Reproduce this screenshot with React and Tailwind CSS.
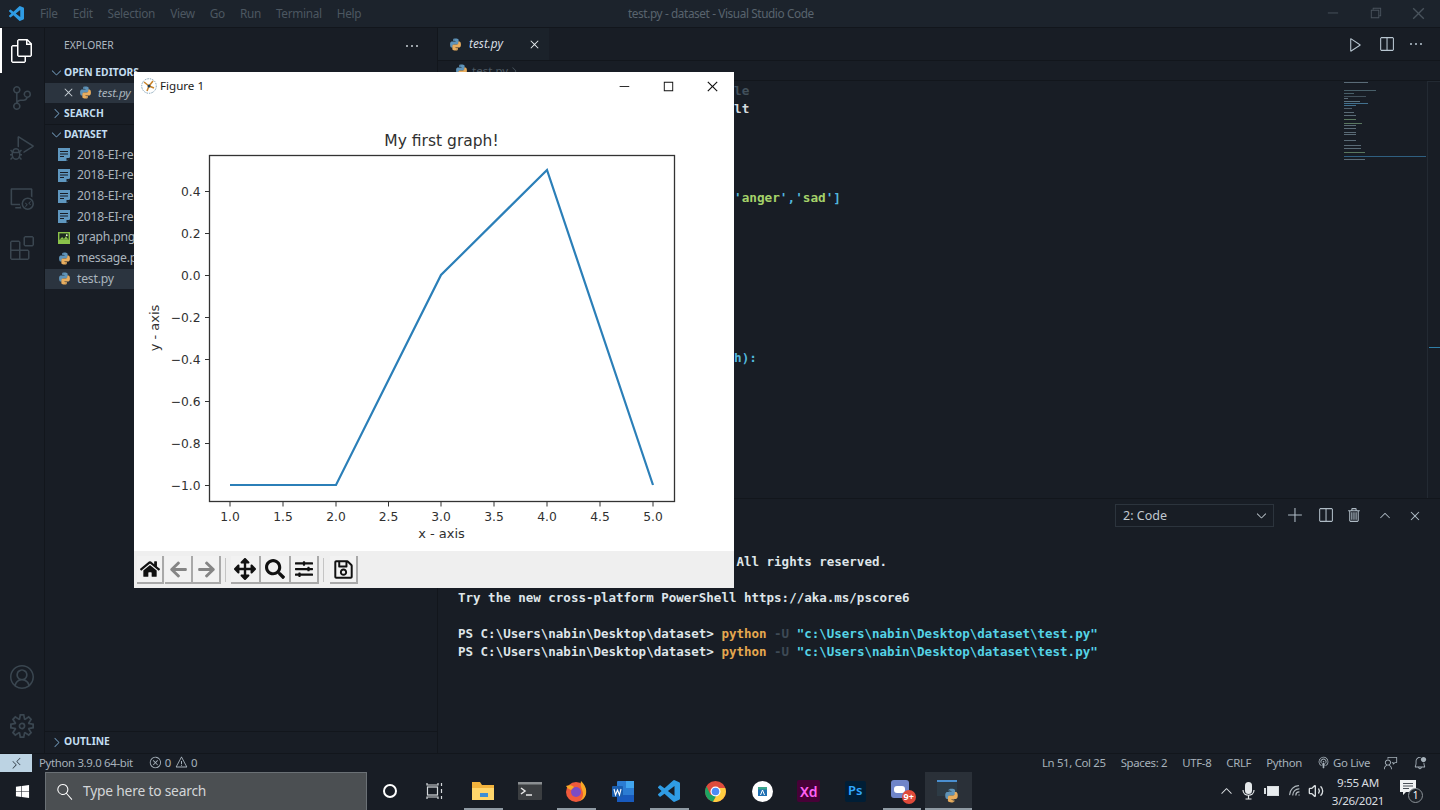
import React from "react";
import {
  VscFiles, VscSourceControl, VscDebugAlt, VscRemoteExplorer, VscExtensions, VscAccount, VscSettingsGear,
  VscEllipsis, VscChevronRight, VscChevronDown, VscChevronUp, VscClose, VscAdd, VscTrash, VscSplitHorizontal,
  VscPlay, VscError, VscWarning, VscRemote, VscFeedback, VscBellDot, VscBroadcast, VscChromeMinimize,
  VscChromeRestore, VscChromeClose, VscChromeMaximize, VscSearch,
} from "react-icons/vsc";
import { FaHome, FaArrowLeft, FaArrowRight, FaArrowsAlt, FaSearch, FaSlidersH, FaRegSave, FaWindows } from "react-icons/fa";
import { Wifi, Volume2 } from "lucide-react";

const Py = ({ size = 14, className = "" }) => (
  <svg width={size} height={size} viewBox="0 0 24 24" className={className}>
    <path fill="#5f93b8" d="M11.9 1C7.2 1 7.5 3 7.5 3v2.6h4.6v.8H5.4S2 6 2 11.900s3 5.700 3 5.700h1.900v-2.700s-.1-3 3-3h5c0 0 2.900 0 2.900-2.800V3.900S18.200 1 11.900 1zM9.200 2.700a.9.900 0 110 1.800.9.900 0 010-1.800z" />
    <path fill="#e8ad5e" d="M12.100 23c4.700 0 4.400-2 4.400-2v-2.600h-4.600v-.8h6.700s3.400.4 3.400-5.500-3-5.700-3-5.700h-1.900v2.700s.1 3-3 3h-5s-2.900 0-2.900 2.800v5.200S5.800 23 12.100 23zm2.700-1.700a.9.900 0 110-1.800.9.900 0 010 1.800z" />
  </svg>
);

const DocIcon = () => (
  <svg width="12" height="13" viewBox="0 0 12 13">
    <path fill="#5f97bf" d="M0 0h12v9l-3 4H0z" />
    <path fill="#181d25" d="M2 3h8v1H2zM2 5.500h8v1H2zM2 8h4v1H2z" />
    <path fill="#181d25" d="M8.500 13v-3H12z" />
  </svg>
);

const ImgIcon = () => (
  <svg width="12" height="12" viewBox="0 0 13 13">
    <rect width="13" height="13" fill="#8bc34a" />
    <rect x="1.500" y="1.500" width="10" height="7" fill="#1d2a20" />
    <path fill="#8bc34a" d="M1.500 8.500l3-3 2 2 2-3 3 4z" />
    <circle cx="9.500" cy="3.500" r="1" fill="#e9f5d8" />
  </svg>
);

const Row = ({ icon, label, active }) => (
  <div className={`flex h-[20.67px] items-center pl-[13px] text-[12.200px] tracking-[-0.2px] text-[#aab4bd] ${active ? "bg-[#2b343f]" : ""}`}>
    <span className="flex w-[19px] items-center">{icon}</span>
    <span className="whitespace-nowrap">{label}</span>
  </div>
);

const Header = ({ open, label, border, tight }) => (
  <div className={`flex h-[20.67px] items-center text-[10.300px] font-bold text-[#c3ddf0] ${tight ? "pb-px" : ""} ${border ? "border-t border-[#12161c]" : ""}`}>
    <span className="flex w-[19px] items-center pl-[4px] text-[#6d93b3]">{open ? <VscChevronDown size={15} /> : <VscChevronRight size={15} />}</span>
    <span className="whitespace-nowrap">{label}</span>
  </div>
);

const ToolBtn = ({ w, children, className = "" }) => (
  <div className={`flex h-[28px] items-center justify-center border-r-2 border-b-2 border-[#a9a9a9] bg-[#f2f2f2] ${w} ${className}`}>{children}</div>
);

const Slot = ({ children, run, active }) => (
  <div className={`relative flex h-full w-[46.5px] items-center justify-center ${active ? "bg-[#2a3038]" : ""}`}>
    {children}
    {run ? <div className={`absolute bottom-0 h-[2px] bg-[#8f9aa3] ${active ? "inset-x-0" : "inset-x-[4px]"}`} /> : null}
  </div>
);

const VSLogo = ({ size = 20 }) => (
  <svg width={size} height={size} viewBox="0 0 24 24">
    <path fill="#2f9ce4" d="M23.150 2.587L18.210.21a1.494 1.494 0 0 0-1.705.29l-9.460 8.630-4.120-3.128a.999.999 0 0 0-1.276.057L.327 7.261A1 1 0 0 0 .326 8.740L3.899 12 .326 15.260a1 1 0 0 0 .001 1.479L1.650 17.940a.999.999 0 0 0 1.276.057l4.120-3.128 9.460 8.630a1.492 1.492 0 0 0 1.704.29l4.942-2.377A1.500 1.500 0 0 0 24 20.060V3.939a1.500 1.500 0 0 0-.85-1.352zm-5.146 14.861L10.826 12l7.178-5.448v10.896z" />
  </svg>
);

const ytick = [["0.4", 191.5], ["0.2", 233.5], ["0.0", 275.5], ["−0.2", 317.5], ["−0.4", 359.5], ["−0.6", 401.5], ["−0.8", 443.5], ["−1.0", 485.5]];
const xtick = [["1.0", 230], ["1.5", 283], ["2.0", 336], ["2.5", 388.5], ["3.0", 441], ["3.5", 494], ["4.0", 547], ["4.5", 600], ["5.0", 653]];

const Chart = () => (
  <svg width="600" height="451" viewBox="134 100 600 451" className="block" fontFamily="'DejaVu Sans', sans-serif" fill="#303030">
    <text x="441.500" y="146" fontSize="15.500" textAnchor="middle">My first graph!</text>
    <rect x="209.500" y="155.500" width="465" height="346" fill="none" stroke="#333" strokeWidth="1.300" />
    {ytick.map(([t, y]) => (
      <g key={t}>
        <path d={`M205 ${y}h4.500`} stroke="#333" />
        <text x="200.500" y={y + 4.500} fontSize="12.300" textAnchor="end">{t}</text>
      </g>
    ))}
    {xtick.map(([t, x]) => (
      <g key={t}>
        <path d={`M${x} 502v4.500`} stroke="#333" />
        <text x={x} y="521" fontSize="12.300" textAnchor="middle">{t}</text>
      </g>
    ))}
    <text x="441.500" y="538" fontSize="13" textAnchor="middle">x - axis</text>
    <text x="0" y="0" fontSize="13" textAnchor="middle" transform="translate(159 328) rotate(-90)">y - axis</text>
    <polyline points="230,485 336,485 441,275 547,170 653,485" fill="none" stroke="#2b7fb8" strokeWidth="2.200" />
  </svg>
);

const Minimap = () => {
  const lines = [
    [83, 24, "#6b7f8c"], [91, 32, "#55707a"], [94, 10, "#55707a"], [97, 22, "#4d5f6a"], [99, 4, "#6b7f8c"], [102, 16, "#6b8a99"],
    [104, 24, "#4e87aa"], [106, 12, "#4e87aa"], [109, 8, "#5b6f7c"], [113, 10, "#6b7f8c"], [116, 12, "#6b7f8c"], [120, 12, "#6b8f6f"],
    [124, 18, "#6b8f6f"], [126, 12, "#6b7f8c"], [129, 12, "#6b7f8c"], [133, 12, "#6b7f8c"], [135, 12, "#6b7f8c"], [141, 12, "#6b7f8c"],
    [146, 17, "#6b7f8c"], [149, 17, "#6b7f8c"], [153, 21, "#6b8f6f"], [160, 21, "#6b7f8c"],
  ];
  return (
    <svg width="95" height="82" viewBox="1345 82 95 82" className="absolute left-[906px] top-0">
      {lines.map(([y, w, c]) => <rect key={y} x="1345" y={y} width={w} height="1" fill={c} opacity="0.8" />)}
      <rect x="1345" y="157" width="82" height="1" fill="#2f5f80" />
    </svg>
  );
};

export default function App() {
  return (
    <div className="relative flex h-[810px] w-[1440px] flex-col overflow-hidden bg-[#181d25] font-['Noto_Sans',sans-serif] text-[#b8c2cb]">
      {/* title bar */}
      <div className="relative flex h-[28px] shrink-0 items-center border-b border-[#12161c] bg-[#1c232c] text-[11.800px] tracking-[-0.3px] text-[#4c5761]">
        <div className="flex w-[40px] justify-center pr-[7px]"><VSLogo size={15} /></div>
        <div className="flex gap-[15px]">
          <span>File</span><span>Edit</span><span>Selection</span><span>View</span><span>Go</span><span>Run</span><span>Terminal</span><span>Help</span>
        </div>
        <span className="absolute left-[628px] top-[5px] whitespace-nowrap tracking-[-0.4px] text-[#59646e]">test.py - dataset - Visual Studio Code</span>
        <div className="ml-auto flex text-[#49535c]">
          <span className="flex w-[44px] justify-center"><VscChromeMinimize size={15} /></span>
          <span className="flex w-[42px] justify-center"><VscChromeRestore size={15} /></span>
          <span className="flex w-[44px] justify-center"><VscChromeClose size={17} /></span>
        </div>
      </div>

      {/* body */}
      <div className="flex min-h-0 flex-1">
        {/* activity bar */}
        <div className="relative flex w-[45px] shrink-0 flex-col items-center border-r border-[#12161c] bg-[#181d25] text-[#3a4650]">
          <div className="absolute left-0 top-0 h-[45px] w-[2px] bg-white" />
          <div className="flex h-[45px] items-center text-white"><VscFiles size={24} /></div>
          <div className="flex h-[50px] items-center"><VscSourceControl size={24} /></div>
          <div className="flex h-[50px] items-center"><VscDebugAlt size={24} /></div>
          <div className="flex h-[50px] items-center"><VscRemoteExplorer size={24} /></div>
          <div className="flex h-[50px] items-center"><VscExtensions size={24} /></div>
          <div className="mt-auto flex h-[50px] items-center pb-[4px]"><VscAccount size={24} /></div>
          <div className="flex h-[49px] items-center pb-[6px]"><VscSettingsGear size={24} /></div>
        </div>

        {/* sidebar */}
        <div className="flex w-[393px] shrink-0 flex-col border-r border-[#12161c] bg-[#181d25]">
          <div className="flex h-[34px] shrink-0 items-center pl-[19px] pr-[17px] pt-[2px] text-[10.300px] text-[#aeb8c1]">
            <span>EXPLORER</span>
            <VscEllipsis size={16} className="ml-auto text-[#c8d0d6]" />
          </div>
          <Header open label="OPEN EDITORS" />
          <div className="flex h-[20.67px] items-center bg-[#2b343f] pl-[16px] text-[11.600px] italic tracking-[-0.1px] text-[#aab4bd]">
            <VscClose size={15} className="mr-[3px] text-[#c8d0d6]" />
            <Py size={13} className="mr-[6px]" />
            <span>test.py</span>
          </div>
          <Header label="SEARCH" />
          <Header open label="DATASET" border tight />
          <Row icon={<DocIcon />} label="2018-EI-re" />
          <Row icon={<DocIcon />} label="2018-EI-re" />
          <Row icon={<DocIcon />} label="2018-EI-re" />
          <Row icon={<DocIcon />} label="2018-EI-re" />
          <Row icon={<ImgIcon />} label="graph.png" />
          <Row icon={<Py size={13} />} label="message.py" />
          <Row icon={<Py size={13} />} label="test.py" active />
          <div className="mt-auto border-t border-[#12161c]">
            <Header label="OUTLINE" tight />
          </div>
        </div>

        {/* editor column */}
        <div className="flex min-w-0 flex-1 flex-col">
          <div className="flex h-[33px] shrink-0 items-stretch border-b border-[#12161c]">
            <div className="flex w-[111px] items-center bg-[#1b222a] pl-[11px] text-[11.800px] italic text-[#d5dce1]">
              <Py size={13} className="mr-[7px]" />
              <span>test.py</span>
              <VscClose size={15} className="ml-auto mr-[7px] text-[#e6ebee]" />
            </div>
            <div className="ml-auto flex items-center pr-[16px] text-[#b9c7d2]">
              <VscPlay size={17} className="mr-[14px]" />
              <VscSplitHorizontal size={17} className="mr-[13px]" />
              <VscEllipsis size={16} />
            </div>
          </div>
          <div className="flex h-[20px] shrink-0 items-center border-b border-[#12161c] pl-[17px] text-[11.500px] text-[#4e5a64]">
            <Py size={13} className="mr-[4px]" />
            <span>test.py</span>
            <VscChevronRight size={12} />
          </div>

          <div className="relative h-[418px] shrink-0 border-b border-[#12161c] pl-[296px] pt-[1px] font-['DejaVu_Sans_Mono',monospace] text-[12.700px] font-bold leading-[17.800px]">
            <div className="text-[#42505b]">le</div>
            <div className="text-[#d4dade]">lt</div>
            <div className="h-[71.200px]" />
            <div><span className="text-[#a5d26a]"><span className="text-[#52b6dc]">'</span>anger<span className="text-[#52b6dc]">'</span></span><span className="text-[#52b6dc]">,</span><span className="text-[#a5d26a]"><span className="text-[#52b6dc]">'</span>sad<span className="text-[#52b6dc]">'</span></span><span className="text-[#52b6dc]">]</span></div>
            <div className="h-[142.400px]" />
            <div className="text-[#52b6dc]">h):</div>
            <Minimap />
            <div className="absolute bottom-0 left-[989px] top-0 w-px bg-[#232a33]" />
            <div className="absolute left-[990px] right-0 top-0 h-px bg-[#232a33]" />
            <div className="absolute right-0 top-[266px] h-px w-[11px] bg-[#2f7fa8]" />
          </div>

          {/* panel */}
          <div className="relative flex min-h-0 flex-1 flex-col">
            <div className="flex h-[33px] shrink-0 items-center justify-end pr-[17px] text-[#aebbc5]">
              <div className="mr-[13px] flex h-[23px] w-[159px] items-center border border-[#2c343d] bg-[#181d25] pl-[7px] pr-[4px] text-[12.500px] text-[#c0c9d0]">
                <span className="pt-[2px]">2: Code</span>
                <VscChevronDown size={15} className="ml-auto" />
              </div>
              <VscAdd size={17} className="mr-[13px]" />
              <VscSplitHorizontal size={17} className="mr-[12px]" />
              <VscTrash size={17} className="mr-[14px]" />
              <VscChevronUp size={16} className="mr-[14px]" />
              <VscClose size={16} />
            </div>
            <div className="pl-[20px] pt-[3px] font-['DejaVu_Sans_Mono',monospace] text-[12.500px] font-bold leading-[18px] text-[#dfe5e9]">
              <div>Windows PowerShell</div>
              <div>Copyright (C) Microsoft Corporation. All rights reserved.</div>
              <div className="h-[18px]" />
              <div>Try the new cross-platform PowerShell https://aka.ms/pscore6</div>
              <div className="h-[18px]" />
              <div>PS C:\Users\nabin\Desktop\dataset&gt; <span className="text-[#e5a84f]">python</span> <span className="text-[#3e4a55]">-U</span> <span className="text-[#55d3e6]">"c:\Users\nabin\Desktop\dataset\test.py"</span></div>
              <div>PS C:\Users\nabin\Desktop\dataset&gt; <span className="text-[#e5a84f]">python</span> <span className="text-[#3e4a55]">-U</span> <span className="text-[#55d3e6]">"c:\Users\nabin\Desktop\dataset\test.py"</span></div>
            </div>
          </div>
        </div>
      </div>

      {/* status bar */}
      <div className="flex h-[19px] shrink-0 items-center border-t border-[#12161c] bg-[#181d25] text-[11.400px] tracking-[-0.33px] text-[#a7b2bb]">
        <div className="flex h-full w-[32px] items-center justify-center bg-[#bcd3e3] text-[#33404a]"><VscRemote size={13} /></div>
        <span className="ml-[7px]">Python 3.9.0 64-bit</span>
        <span className="ml-[16px] flex items-center gap-[3px]"><VscError size={13} />0<VscWarning size={13} className="ml-[1px]" />0</span>
        <div className="ml-auto flex items-center pr-[13px]">
          <span className="mr-[15px]">Ln 51, Col 25</span>
          <span className="mr-[15px]">Spaces: 2</span>
          <span className="mr-[15px]">UTF-8</span>
          <span className="mr-[15px]">CRLF</span>
          <span className="mr-[15px]">Python</span>
          <span className="mr-[14px] flex items-center gap-[3px]"><VscBroadcast size={13} />Go Live</span>
          <VscFeedback size={14} className="mr-[15px]" />
          <VscBellDot size={14} />
        </div>
      </div>

      {/* taskbar */}
      <div className="flex h-[38px] shrink-0 items-center bg-[#181d25]">
        <div className="flex h-full w-[45px] items-center justify-center text-white"><FaWindows size={15} /></div>
        <div className="flex h-full w-[322px] items-center border-x border-t border-[#6a7075] bg-[#4b4f52] pl-[11px] text-[13.800px] tracking-[-0.2px] text-[#d3d6d8]">
          <VscSearch size={16} className="mr-[10px] -scale-x-100 text-white" />
          <span>Type here to search</span>
        </div>
        <div className="flex h-full w-[46px] items-center justify-center"><div className="h-[14px] w-[14px] rounded-full border-2 border-white" /></div>
        <div className="flex h-full w-[44px] items-center justify-center">
          <svg width="18" height="16" viewBox="0 0 18 16" fill="none" stroke="#d5d9dc" strokeWidth="1.200"><path d="M1 0v2h11V0M1 16v-2h11v2" /><rect x="1.500" y="4" width="10" height="8" /><path d="M15.500 0v3M15.500 6v4M15.500 13v3" /></svg>
        </div>
        <div className="flex h-full items-center pl-[3px]">
          <Slot run>
            <svg width="22" height="18" viewBox="0 0 22 18"><path fill="#f2b33d" d="M0 0h8l2 3h12v15H0z" /><path fill="#ffd66b" d="M0 6h22v12H0z" /><path fill="#3d8fd6" d="M8 11h8v4H8z" /></svg>
          </Slot>
          <Slot>
            <svg width="24" height="18" viewBox="0 0 24 18"><rect width="24" height="18" rx="1" fill="#3b3e41" /><rect width="24" height="2.500" fill="#8b8f92" /><path d="M3 6l4 3-4 3" stroke="#e8e8e8" strokeWidth="1.500" fill="none" /><path d="M8 13h6" stroke="#e8e8e8" strokeWidth="1.500" /></svg>
          </Slot>
          <Slot run>
            <svg width="22" height="22" viewBox="0 0 22 22"><circle cx="11" cy="12" r="10" fill="#ef5a3c" /><path fill="#f9a825" d="M16 1c4 4 6 8 5 13-1 4-4 6-6 7 3-3 4-7 2-11-1-3-2-6-1-9z" /><circle cx="11" cy="12" r="5" fill="#7b4cc4" /><path fill="#f9a825" d="M1 6c3-1 6-1 8 1l-3 3C4 9 2 8 1 6z" /></svg>
          </Slot>
          <Slot>
            <svg width="22" height="21" viewBox="0 0 22 21"><rect x="5" width="17" height="21" rx="1" fill="#2b7cd3" /><rect x="5" y="14" width="17" height="7" fill="#185abd" /><rect x="14" y="0" width="8" height="7" fill="#41a5ee" /><rect y="5" width="11" height="11" rx="1" fill="#1a5dad" /><path d="M2 8l1.500 6 2-5 2 5L9 8" stroke="#fff" strokeWidth="1.100" fill="none" /></svg>
          </Slot>
          <Slot run><VSLogo size={22} /></Slot>
          <Slot>
            <svg width="21" height="21" viewBox="0 0 21 21"><circle cx="10.500" cy="10.500" r="10.500" fill="#dd4b3c" /><path fill="#1da462" d="M1.500 5.200A10.500 10.500 0 0 0 8 20.700l3.500-6-6-1z" /><path fill="#ffcd40" d="M20.300 7H10.500l1 7.500L8 20.700A10.500 10.500 0 0 0 20.300 7z" /><circle cx="10.500" cy="10.500" r="5" fill="#fff" /><circle cx="10.500" cy="10.500" r="3.800" fill="#4c8bf5" /></svg>
          </Slot>
          <Slot>
            <svg width="21" height="21" viewBox="0 0 21 21"><circle cx="10.500" cy="10.500" r="10.500" fill="#fff" /><path fill="#1f6fb2" d="M6 6h9v9H6z" /><path fill="#3aa58a" d="M6 6h9v2.500H6z" /><path d="M8.500 14l2-5 2 5" stroke="#fff" fill="none" /></svg>
          </Slot>
          <Slot>
            <div className="flex h-[22px] w-[23px] items-center justify-center rounded-[2px] bg-[#470137] text-[14px] font-semibold text-[#ff61f6]">Xd</div>
          </Slot>
          <Slot>
            <div className="flex h-[21px] w-[21px] items-center justify-center rounded-[2px] bg-[#001e36] text-[13px] font-semibold text-[#31a8ff]">Ps</div>
          </Slot>
          <Slot run>
            <div className="relative h-[22px] w-[22px]">
              <div className="absolute left-0 top-0 h-[18px] w-[18px] rounded-[3px] bg-[#6f85c9]" />
              <div className="absolute left-[3px] top-[6px] h-[7px] w-[11px] rounded-[3px] bg-white" />
              <div className="absolute -bottom-[2px] -right-[3px] flex h-[14px] w-[14px] items-center justify-center rounded-full bg-[#e04a3a] text-[9px] font-bold text-white">9+</div>
            </div>
          </Slot>
          <Slot run active>
            <div className="relative h-[22px] w-[22px]">
              <div className="absolute left-0 top-0 h-[16px] w-[20px] border-t-2 border-[#4a8fd0] bg-[#2d3b45]" />
              <Py size={15} className="absolute -bottom-[1px] right-0" />
            </div>
          </Slot>
        </div>
        <div className="ml-auto flex h-full items-center pr-[18px] text-[#d8dde0]">
          <VscChevronUp size={17} className="mr-[6px]" />
          <svg width="15" height="18" viewBox="0 0 15 18" className="mr-[8px]"><rect x="4" y="0" width="7" height="12" rx="3.500" fill="#e4e8ea" /><path d="M2 8c0 7 11 7 11 0M7.500 13v4M4.500 17h6" stroke="#e4e8ea" strokeWidth="1.200" fill="none" /></svg>
          <svg width="15" height="10" viewBox="0 0 15 10" className="mr-[9px]"><path fill="#d8dde0" d="M0 2h2v6H0zM3 0h12v10H3z" /><rect x="4" y="1" width="10" height="8" fill="#e8ecef" /></svg>
          <Wifi size={15} className="mr-[5.500px] -rotate-45 text-[#aeb6bc]" />
          <Volume2 size={16} className="mr-[8px]" />
          <div className="mr-[16px] flex w-[52px] flex-col items-center pt-[1px] text-[11.600px] leading-[18px] tracking-[-0.3px]">
            <span>9:55 AM</span>
            <span>3/26/2021</span>
          </div>
          <div className="relative h-[22px] w-[22px]">
            <svg width="17" height="16" viewBox="0 0 17 16"><path fill="#f0f2f3" d="M0 0h16v12H6l-3 3v-3H0z" /><path stroke="#4a5058" d="M3 3.500h10M3 6h10M3 8.500h6" /></svg>
            <div className="absolute -bottom-[1px] -right-[1px] flex h-[15px] w-[15px] items-center justify-center rounded-full border border-[#8a9197] bg-[#1d2229] text-[10px] text-white">1</div>
          </div>
        </div>
      </div>

      {/* Figure window */}
      <div className="absolute left-[134px] top-[72px] flex h-[516px] w-[600px] flex-col bg-white text-black">
        <div className="flex h-[28px] shrink-0 items-center pl-[7px] text-[11.600px] text-[#1a1a1a]">
          <svg width="16" height="16" viewBox="0 0 16 16" className="mr-[3px]">
            <circle cx="8" cy="8" r="7.300" fill="#fff" stroke="#7fa0b5" strokeDasharray="1.500 1" />
            <path d="M8 8L3 4M8 8l4-5M8 8l5 2M8 8l-2 5" stroke="#c9842b" strokeWidth="1.600" />
            <circle cx="8" cy="8" r="1.500" fill="#1f3a52" />
          </svg>
          <span>Figure 1</span>
          <div className="ml-auto flex text-[#111]">
            <span className="flex w-[44px] justify-center"><VscChromeMinimize size={14} /></span>
            <span className="flex w-[44px] justify-center"><VscChromeMaximize size={15} /></span>
            <span className="flex w-[44px] justify-center"><VscChromeClose size={15} /></span>
          </div>
        </div>
        <Chart />
        <div className="flex h-[37px] shrink-0 items-center bg-[#efefef] pl-[3px] pt-[1px]">
          <ToolBtn w="w-[27px] mr-px"><FaHome size={20} className="text-[#111]" /></ToolBtn>
          <ToolBtn w="w-[28px]"><FaArrowLeft size={19} className="text-[#858585]" /></ToolBtn>
          <ToolBtn w="w-[28px]"><FaArrowRight size={19} className="text-[#858585]" /></ToolBtn>
          <div className="ml-[4px] mr-[5px] h-[24px] w-px bg-[#c4c4c4]" />
          <ToolBtn w="w-[30px]"><FaArrowsAlt size={22} className="text-[#111]" /></ToolBtn>
          <ToolBtn w="w-[30px]"><FaSearch size={20} className="text-[#111]" /></ToolBtn>
          <ToolBtn w="w-[28px]"><FaSlidersH size={18} className="text-[#111]" /></ToolBtn>
          <div className="ml-[4px] mr-[6px] h-[24px] w-px bg-[#c4c4c4]" />
          <ToolBtn w="w-[28px]"><FaRegSave size={21} className="text-[#111]" /></ToolBtn>
        </div>
      </div>
    </div>
  );
}
